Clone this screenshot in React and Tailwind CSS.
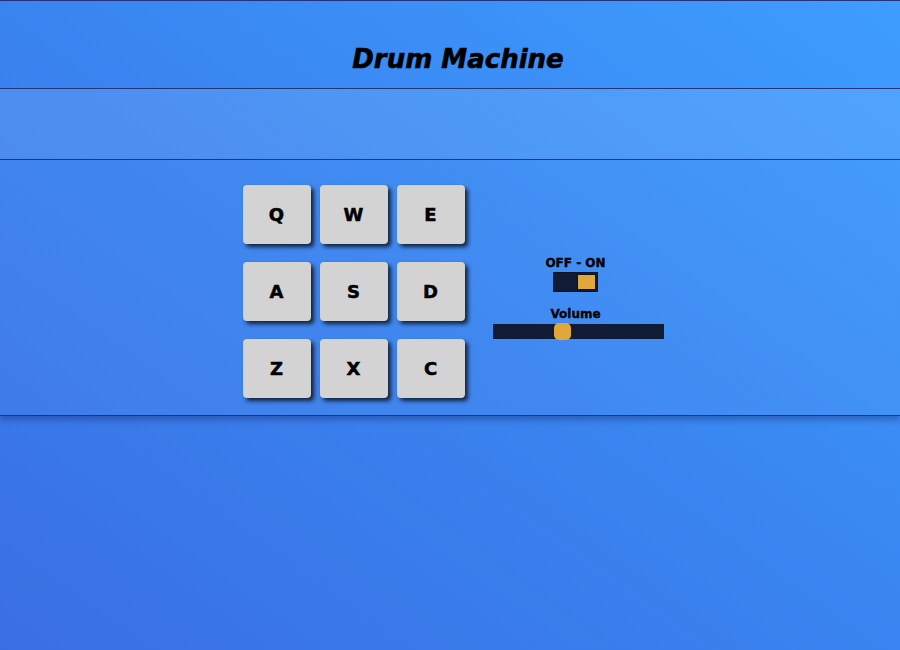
import React, { useState } from 'react'

const pads = ['Q', 'W', 'E', 'A', 'S', 'D', 'Z', 'X', 'C']

export default function App() {
  const [power, setPower] = useState(true)
  const [volume, setVolume] = useState(0.4)

  return (
    <div
      className="min-h-[650px] w-full bg-gradient-to-tr from-[#3a6fe3] via-[#3984f0] to-[#3e9dfe] text-black"
      style={{ fontFamily: '"DejaVu Sans", "Liberation Sans", sans-serif' }}
    >
      <header className="h-[89px] border-y border-[#26337a] flex items-start justify-center pt-[42px] pl-[16px]">
        <h1 className="text-[26px] leading-[32px] font-bold italic [-webkit-text-stroke:0.6px_black]">Drum Machine</h1>
      </header>

      <div className="h-[71px] bg-white/10 border-b border-[#26337a]" />

      <section className="h-[256px] border-b border-[#26337a] bg-white/[0.04] shadow-[0_4px_6px_rgba(20,30,90,0.35)] flex items-start justify-center gap-[28px] pt-[25px] pl-[6px]">
        <div className="grid grid-cols-[repeat(3,68px)] gap-x-[9px] gap-y-[18px]">
          {pads.map(k => (
            <button
              key={k}
              className="h-[59px] rounded-[4px] bg-[#d3d3d3] shadow-[3px_3px_4px_rgba(0,0,0,0.75)] flex items-center justify-center text-[18px] font-bold [-webkit-text-stroke:0.5px_black]"
            >
              {k}
            </button>
          ))}
        </div>

        <div className="w-[171px] flex flex-col items-center pt-[71px]">
          <div className="mr-[5px] text-[12px] font-bold leading-[14px] [-webkit-text-stroke:0.3px_black]">OFF - ON</div>
          <div
            onClick={() => setPower(!power)}
            className={`mr-[5px] mt-[2px] w-[45px] h-[20px] bg-[#0f1c33] border border-[#0a1426] p-[1px] flex cursor-pointer ${power ? 'justify-end' : 'justify-start'}`}
          >
            <div className="w-[19px] h-full bg-[#e0a73a] border border-[#0a1426]" />
          </div>
          <div className="mr-[5px] mt-[15px] text-[12px] font-bold leading-[14px] [-webkit-text-stroke:0.3px_black]">Volume</div>
          <div className="relative mt-[3px] w-[171px] h-[15px] bg-[#0f1c33]">
            <div
              className="absolute top-[-1px] w-[17px] h-[17px] rounded-[5px] bg-[#e0a73a]"
              style={{ left: `${volume * 154}px` }}
            />
            <input
              type="range"
              min="0"
              max="1"
              step="0.01"
              value={volume}
              onChange={e => setVolume(Number(e.target.value))}
              className="absolute inset-0 w-full h-full opacity-0 cursor-pointer"
            />
          </div>
        </div>
      </section>
    </div>
  )
}
